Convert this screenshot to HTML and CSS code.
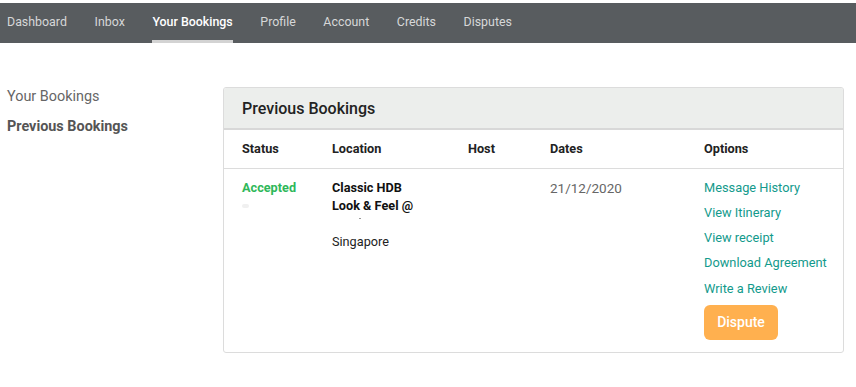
FILE: index.html
```html
<!DOCTYPE html>
<html>
<head>
<meta charset="utf-8">
<link rel="stylesheet" href="styles.css">
</head>
<body>
<nav class="topnav">
  <a class="nav-item">Dashboard</a>
  <a class="nav-item">Inbox</a>
  <a class="nav-item active">Your Bookings</a>
  <a class="nav-item">Profile</a>
  <a class="nav-item">Account</a>
  <a class="nav-item">Credits</a>
  <a class="nav-item">Disputes</a>
</nav>
<main class="main">
  <aside class="sidebar">
    <div class="side-link">Your Bookings</div>
    <div class="side-link current">Previous Bookings</div>
  </aside>
  <section class="card">
    <div class="card-header">Previous Bookings</div>
    <table class="bookings">
      <thead>
        <tr>
          <th class="c-status">Status</th>
          <th class="c-loc">Location</th>
          <th class="c-host">Host</th>
          <th class="c-dates">Dates</th>
          <th class="c-opt">Options</th>
        </tr>
      </thead>
      <tbody>
        <tr>
          <td class="c-status">
            <div class="accepted">Accepted</div>
            <div class="blur-dot"></div>
          </td>
          <td class="c-loc">
            <div class="loc-line bold">Classic HDB</div>
            <div class="loc-line bold">Look &amp; Feel @</div>
            <div class="loc-line"><span class="tiny-dash"></span></div>
            <div class="loc-line">Singapore</div>
          </td>
          <td class="c-host"></td>
          <td class="c-dates"><div class="date">21/12/2020</div></td>
          <td class="c-opt">
            <div class="opts">
              <a class="opt-link">Message History</a>
              <a class="opt-link">View Itinerary</a>
              <a class="opt-link">View receipt</a>
              <a class="opt-link">Download Agreement</a>
              <a class="opt-link">Write a Review</a>
              <button class="dispute">Dispute</button>
            </div>
          </td>
        </tr>
      </tbody>
    </table>
  </section>
</main>
</body>
</html>
```
FILE: styles.css
```css
* { box-sizing: border-box; }
html, body { margin: 0; padding: 0; background: #fff; }
body {
  font-family: Roboto, "Liberation Sans", Arial, sans-serif;
  color: #222;
  padding-top: 3px;
}
.topnav {
  height: 40px;
  background: #585c5f;
  display: flex;
  align-items: stretch;
  padding-left: 7px;
  gap: 27.6px;
}
.nav-item {
  font-size: 12.4px;
  color: #d6d7d8;
  display: flex;
  align-items: center;
  padding-bottom: 2px;
  border-bottom: 3px solid transparent;
  padding-top: 1px;
}
.nav-item.active {
  color: #fff;
  font-weight: 500;
  border-bottom-color: #d3d3d3;
}
.main {
  display: flex;
  padding-top: 41px;
}
.sidebar {
  width: 223px;
  padding-left: 7px;
  padding-top: 3px;
  flex: none;
}
.side-link {
  font-size: 14.4px;
  color: #666;
  height: 30px;
  line-height: 20px;
}
.side-link.current {
  font-weight: 700;
  color: #555;
}
.card {
  width: 621px;
  border: 1px solid #dcdcdc;
  border-radius: 3px;
  overflow: hidden;
  height: 266px;
  margin-top: 3px;
}
.card-header {
  background: #eceeec;
  height: 42px;
  border-bottom: 2px solid #d8d8d8;
  padding-left: 18px;
  font-size: 16px;
  font-weight: 500;
  color: #222;
  display: flex;
  align-items: center;
}
.bookings {
  border-collapse: collapse;
  width: 100%;
  font-size: 13px;
}
.bookings th {
  text-align: left;
  font-weight: 700;
  font-size: 12.7px;
  height: 38px;
  border-bottom: 1px solid #dcdcdc;
  padding: 0;
  vertical-align: middle;
  color: #222;
}
.bookings td {
  vertical-align: top;
  padding: 0;
  padding-top: 10px;
}
.c-status { width: 108px; padding-left: 18px !important; }
.c-loc { width: 136px; }
.c-host { width: 82px; }
.c-dates { width: 154px; }
.accepted { color: #2fb85a; font-weight: 700; font-size: 12.7px; line-height: 18px; }
.blur-dot {
  width: 7px; height: 4px; border-radius: 2px;
  background: #f0f0f0;
  margin-top: 7px;
}
.loc-line { line-height: 18px; height: 18px; color: #222; font-size: 12.7px; }
.loc-line.bold { font-weight: 700; color: #111; }
.tiny-dash {
  display: block; width: 2px; height: 1px; background: #999;
  margin-left: 27px; position: relative; top: 3px;
}
.date { color: #666; line-height: 18px; font-size: 13.5px; }
.opts { display: flex; flex-direction: column; align-items: flex-start; }
.opt-link {
  color: #139a8c;
  font-size: 12.8px;
  line-height: 18px;
  margin-bottom: 7.3px;
}
.dispute {
  margin-top: 0;
  background: #ffb04f;
  border: none;
  border-radius: 6px;
  color: #fff;
  font-family: inherit;
  font-size: 14px;
  font-weight: 500;
  width: 74px;
  height: 35px;
  padding: 0;
}
```
